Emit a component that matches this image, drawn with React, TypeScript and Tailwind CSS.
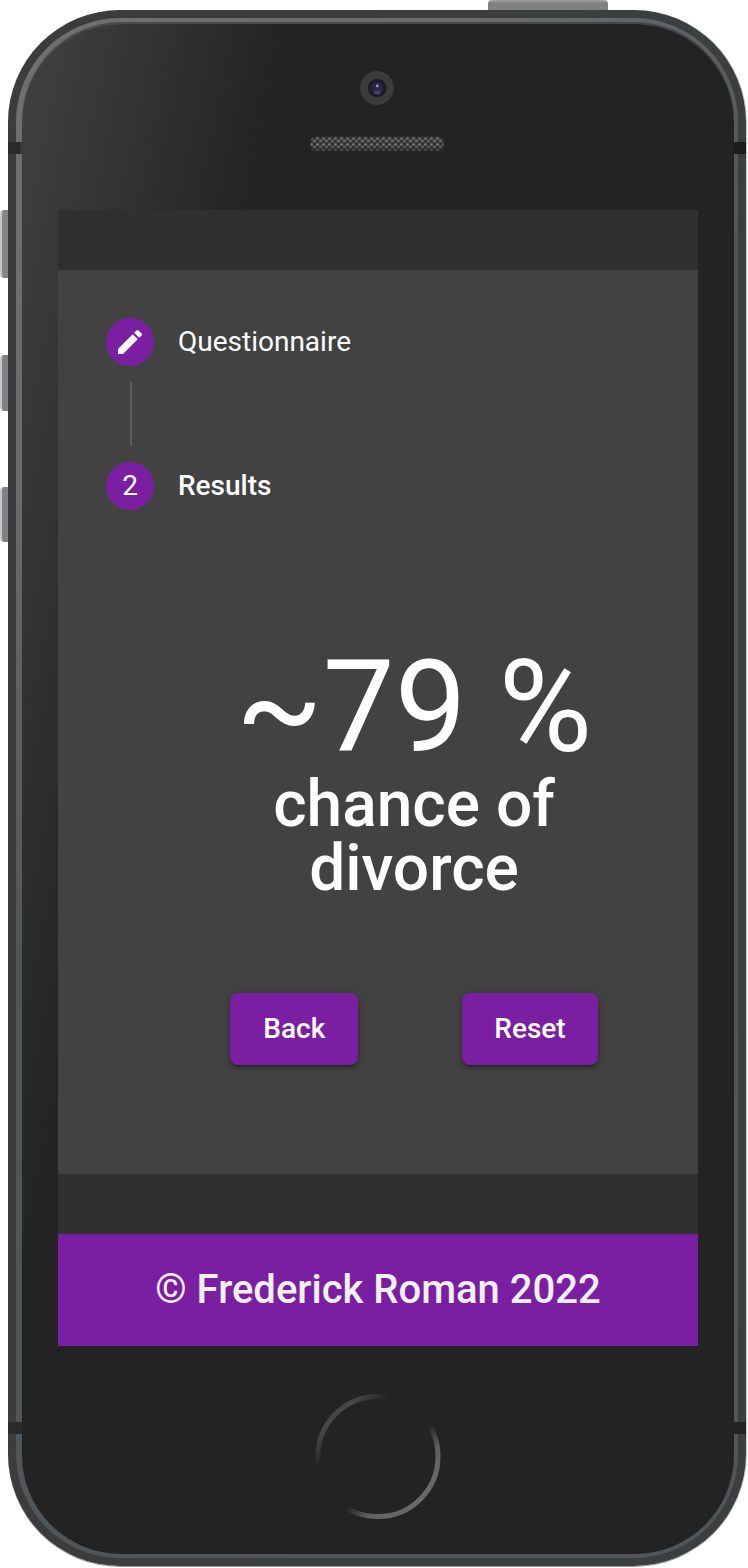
import React from "react";

function Pencil() {
  return (
    <svg viewBox="0 0 24 24" className="size-8 fill-white" aria-hidden="true">
      <path d="M3 17.25V21h3.75L17.81 9.94l-3.75-3.75L3 17.25zM20.71 7.04c.39-.39.39-1.02 0-1.41l-2.34-2.34c-.39-.39-1.02-.39-1.41 0l-1.83 1.83 3.75 3.75 1.83-1.83z" />
    </svg>
  );
}

function Step({ label, children, active = false }: { label: string; children: React.ReactNode; active?: boolean }) {
  return (
    <div className="flex h-12 items-center gap-6">
      <div className="flex size-12 items-center justify-center rounded-full bg-[#7b1fa2] text-[28px] leading-none">{children}</div>
      <span className={active ? "text-[28px] leading-none font-medium" : "text-[28px] leading-none"}>{label}</span>
    </div>
  );
}

function ActionButton({ children }: { children: string }) {
  return (
    <button className="h-[72px] min-w-32 rounded-lg bg-[#7b1fa2] px-8 text-[28px] leading-none font-medium shadow-[0_3px_2px_-2px_rgba(0,0,0,.3),0_3px_4px_rgba(0,0,0,.25),0_1px_8px_rgba(0,0,0,.15)]">
      {children}
    </button>
  );
}

function Screen() {
  return (
    <main className="flex h-[1136px] w-[640px] shrink-0 flex-col justify-between bg-[#303030] pt-[60px]">
      <section className="flex h-[904px] flex-col bg-[#424242] p-12">
        <Step label="Questionnaire">
          <Pencil />
        </Step>
        <div className="my-4 ml-6 h-16 w-0.5 bg-[#5c5c5c]" />
        <Step label="Results" active>
          2
        </Step>
        <div className="flex flex-col items-center pt-[132px] pl-[72px] text-center">
          <p className="text-[128px] leading-[130px] whitespace-nowrap">~79 %</p>
          <h1 className="w-[300px] pt-px text-[64px] leading-[64px] font-medium">chance of divorce</h1>
          <div className="flex gap-[104px] pt-[92px]">
            <ActionButton>Back</ActionButton>
            <ActionButton>Reset</ActionButton>
          </div>
        </div>
      </section>
      <footer className="flex h-28 items-center justify-center bg-[#7b1fa2] text-[40px] leading-none font-medium text-[#f1f1f1]">
        © Frederick Roman 2022
      </footer>
    </main>
  );
}

function Camera() {
  return (
    <svg viewBox="0 0 36 36" className="size-9" aria-hidden="true">
      <circle cx="18" cy="18" r="17" fill="#3b3b3b" />
      <circle cx="18.3" cy="18" r="9.3" fill="#1d1b26" />
      <circle cx="18.3" cy="18" r="6" fill="#28264a" />
      <ellipse cx="18.3" cy="22.5" rx="3.5" ry="2" fill="#414069" />
      <circle cx="18.3" cy="16" r="1.4" fill="#9a99bd" />
    </svg>
  );
}

function Speaker() {
  return (
    <svg viewBox="0 0 134 16" className="h-4 w-[134px]" aria-hidden="true">
      <defs>
        <pattern id="grille" width="6" height="6" patternUnits="userSpaceOnUse">
          <rect width="6" height="6" fill="#414141" />
          <circle cx="1.5" cy="2.5" r="1.2" fill="#858585" />
          <circle cx="4.5" cy="5" r="1.2" fill="#777777" />
          <circle cx="4.5" cy="2" r="1" fill="#292929" />
          <circle cx="1.5" cy="5" r="1" fill="#292929" />
        </pattern>
        <linearGradient id="grilleShade" x1="0" y1="0" x2="0" y2="1">
          <stop offset="0" stopColor="#232323" stopOpacity=".35" />
          <stop offset=".25" stopColor="#232323" stopOpacity=".05" />
          <stop offset=".6" stopColor="#232323" stopOpacity=".1" />
          <stop offset="1" stopColor="#232323" stopOpacity=".6" />
        </linearGradient>
      </defs>
      <rect x="0.5" y="0.5" width="133" height="14.5" rx="5.5" fill="url(#grille)" />
      <rect x="0.5" y="0.5" width="133" height="14.5" rx="5.5" fill="url(#grilleShade)" />
    </svg>
  );
}

function HomeButton() {
  return (
    <svg viewBox="0 0 128 128" className="size-32 shrink-0" aria-hidden="true">
      <defs>
        <linearGradient id="ring" x1="15" y1="15" x2="113" y2="113" gradientUnits="userSpaceOnUse">
          <stop offset="0" stopColor="#4a4a4a" />
          <stop offset=".1" stopColor="#464646" />
          <stop offset=".25" stopColor="#232323" />
          <stop offset=".6" stopColor="#232323" />
          <stop offset=".76" stopColor="#606060" />
          <stop offset="1" stopColor="#6c6c6c" />
        </linearGradient>
      </defs>
      <circle cx="64" cy="64.5" r="60" fill="none" stroke="url(#ring)" strokeWidth="5" />
    </svg>
  );
}

function SideButtons() {
  return (
    <div className="absolute inset-y-0 left-0 flex w-3 flex-col pt-[210px]">
      <div className="h-17 rounded-l-[4px] border-l-2 border-[#c9c9c9] bg-[#858585]" />
      <div className="mt-[77px] h-14 rounded-l-[4px] border-l-2 border-[#c9c9c9] bg-[#818188]" />
      <div className="mt-[76px] h-[55px] rounded-l-[4px] border-l-2 border-[#c9c9c9] bg-[#818188]" />
    </div>
  );
}

function AntennaBands() {
  return (
    <div className="absolute inset-y-0 right-0.5 left-2 flex flex-col justify-between pt-[142px] pb-[134px]">
      <div className="flex justify-between">
        <span className="h-3 w-3.5 bg-[linear-gradient(90deg,#2a2a2a_12px,#383838_12px)]" />
        <span className="h-3 w-3 bg-[#1a1d1c]" />
      </div>
      <div className="flex justify-between">
        <span className="h-3 w-3.5 bg-[#2a2b2a]" />
        <span className="h-3 w-3 bg-[#222423]" />
      </div>
    </div>
  );
}

export default function App() {
  return (
    <div className="relative h-[1568px] w-[748px] overflow-hidden bg-white pt-2.5 pl-2 font-['Roboto',sans-serif] text-white">
      <div className="absolute top-0 left-[488px] h-3 w-[120px] rounded-t-[4px] bg-[linear-gradient(#9a9a9a_0_2px,#818181_2px)]" />
      <SideButtons />
      <div className="relative h-[1556px] w-[738px] rounded-[112px] bg-[linear-gradient(100deg,#3c3c3c_0%,#3c3c3c_35%,#3b3f3f_60%)] p-2 shadow-[1px_0_0_#cccccc,0_1px_0_#999999]">
        <div className="h-[1540px] w-[722px] rounded-[104px] bg-[linear-gradient(135deg,#707070_0%,#6a6a6a_22%,#5d6165_30%,#505559_42%,#50565a_100%)] pt-1.5 pl-1.5">
          <div className="flex h-[1530px] w-[712px] flex-col items-center rounded-[99px] bg-[linear-gradient(102deg,#404040_0%,#3b3b3b_6%,#303030_15%,#232323_26%,#232323_100%)] shadow-[0_-2px_0_rgba(50,50,50,.6)]">
            <header className="flex h-[186px] shrink-0 flex-col items-center gap-[30px] pt-[46px] pr-0.5">
              <Camera />
              <Speaker />
            </header>
            <Screen />
            <div className="pt-[46px]">
              <HomeButton />
            </div>
          </div>
        </div>
      </div>
      <AntennaBands />
    </div>
  );
}
